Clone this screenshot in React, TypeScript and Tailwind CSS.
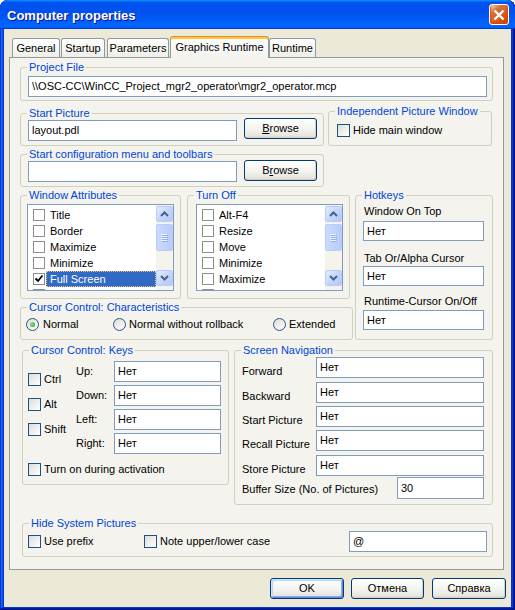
import React from 'react';

type BoxProps = { title: string; className?: string; children?: React.ReactNode };

const GroupBox = ({ title, className = '', children }: BoxProps) => (
  <div className={`relative shrink-0 rounded-[3px] border border-[#D0D0BF] ${className}`}>
    <span className="absolute -top-[7px] left-[6px] whitespace-nowrap bg-[#F4F3EE] px-[2px] leading-[13px] text-[#0046D5]">
      {title}
    </span>
    {children}
  </div>
);

const Edit = ({ value = '', className = '', h = 'h-[21px]' }: { value?: string; className?: string; h?: string }) => (
  <div className={`flex shrink-0 items-center border border-[#7F9DB9] bg-white px-[3px] leading-[13px] text-black ${h} ${className}`}>
    {value}
  </div>
);

const CheckBox = () => (
  <span className="h-[13px] w-[13px] shrink-0 border border-[#1C5180] bg-[linear-gradient(135deg,#DCDCD7,#FFFFFF)]" />
);

const Radio = ({ checked }: { checked?: boolean }) => (
  <span className="flex h-[13px] w-[13px] shrink-0 items-center justify-center rounded-full border border-[#2C5385] bg-[linear-gradient(135deg,#DCDCD7,#FFFFFF)]">
    {checked && <span className="h-[5px] w-[5px] rounded-full bg-[radial-gradient(circle_at_35%_35%,#8EE58A,#21A121)]" />}
  </span>
);

const XPButton = ({ children, className = '', isDefault = false }: { children: React.ReactNode; className?: string; isDefault?: boolean }) => (
  <div
    className={`flex h-[21px] shrink-0 items-center justify-center rounded-[3px] border border-[#003C74] bg-[linear-gradient(180deg,#FFFFFF,#F3F3EF_55%,#E6E5DE_88%,#D6D0C5)] text-black ${
      isDefault
        ? 'shadow-[inset_1px_1px_0_#CEE7FF,inset_-1px_-1px_0_#6982EE,inset_2px_2px_0_#BCD4F6,inset_-2px_-2px_0_#89ADE4]'
        : 'shadow-[inset_-1px_-1px_0_#D6D0C5]'
    } ${className}`}
  >
    {children}
  </div>
);

const ScrollBtn = ({ down }: { down?: boolean }) => (
  <div className="flex h-[16px] shrink-0 items-center justify-center rounded-[2px] border border-[#B9CCF7] bg-[linear-gradient(135deg,#E3EBFE,#C6D6FC_50%,#B3C8F8)]">
    <svg width="9" height="6" viewBox="0 0 9 6">
      <path d={down ? 'M1 1L4.5 4.5L8 1' : 'M1 5L4.5 1.5L8 5'} fill="none" stroke="#4D6185" strokeWidth="2" />
    </svg>
  </div>
);

const ScrollBar = () => (
  <div className="flex w-[17px] shrink-0 flex-col bg-[#F4F3EC] pb-[4px] pt-[1px]">
    <ScrollBtn />
    <div className="mt-[2px] flex h-[27px] shrink-0 items-center justify-center rounded-[2px] border border-[#B9CCF7] bg-[linear-gradient(90deg,#CBD9FC,#B8CCF9)]">
      <svg width="7" height="8" viewBox="0 0 7 8">
        {[0, 2, 4, 6].map((y) => (
          <g key={y}>
            <rect x="0" y={y} width="6" height="1" fill="#EEF4FE" />
            <rect x="1" y={y + 1} width="6" height="1" fill="#8CB0F8" />
          </g>
        ))}
      </svg>
    </div>
    <div className="flex-1" />
    <ScrollBtn down />
  </div>
);

const CheckList = ({ items, selected, className = '' }: { items: string[]; selected?: number; className?: string }) => (
  <div className={`flex h-[87px] w-[147px] border border-[#7F9DB9] bg-white ${className}`}>
    <div className="flex-1 overflow-hidden pt-[2px]">
      {items.map((it, i) => (
        <div key={it} className="flex h-[16px] items-center">
          <span className="ml-[5px] flex h-[12px] w-[12px] shrink-0 items-center justify-center border border-[#8E8F8F] bg-white">
            {i === selected && (
              <svg width="10" height="10" viewBox="0 0 10 10">
                <path d="M1.5 4.5L4 7L8.5 1.5" fill="none" stroke="#000" strokeWidth="1.8" />
              </svg>
            )}
          </span>
          <span
            className={`ml-[1px] flex h-full flex-1 items-center pl-[4px] ${
              i === selected ? 'bg-[#316AC5] text-white outline-1 -outline-offset-1 outline-dotted outline-[#E8C877]' : ''
            }`}
          >
            {it}
          </span>
        </div>
      ))}
      {/* next row, only the top of its box shows */}
      <div className="flex h-[16px] items-center">
        <span className="ml-[5px] h-[12px] w-[12px] shrink-0 border border-[#8E8F8F] bg-white" />
      </div>
    </div>
    <ScrollBar />
  </div>
);

const tabs = [
  { label: 'General', cls: 'w-[48px]' },
  { label: 'Startup', cls: 'ml-[1px] w-[44px]' },
  { label: 'Parameters', cls: 'ml-[2px] w-[62px]' },
  { label: 'Graphics Runtime', cls: 'ml-[1px] w-[99px]', active: true },
  { label: 'Runtime', cls: 'w-[47px]' },
];

const navRows = ['Forward', 'Backward', 'Start Picture', 'Recall Picture', 'Store Picture'];
const navGaps = ['', 'mt-[4px]', 'mt-[3px]', 'mt-[3px]', 'mt-[4px]'];

export default function App() {
  return (
    <div className="h-[610px] w-[515px] bg-white text-[11px] leading-[13px] text-black [font-family:'Liberation_Sans',Arial,sans-serif]">
      <div className="flex h-[610px] w-[515px] flex-col overflow-hidden rounded-t-[8px] bg-[#0831D9] pb-[3px] shadow-[inset_-1px_-1px_#00138c,inset_1px_1px_#0831d9,inset_-2px_-2px_#001ea0,inset_2px_2px_#166aee,inset_-3px_-3px_#003bda,inset_3px_3px_#0855dd]">
        {/* title bar */}
        <div className="flex h-[29px] shrink-0 items-center rounded-t-[8px] bg-[linear-gradient(180deg,#0997ff,#0053ee_8%,#0050ee_40%,#06f_88%,#06f_93%,#005bff_95%,#003dd7_96%,#003dd7)] pl-[7px] pr-[6px]">
          <span className="pt-[2px] text-[13px] font-bold text-white [text-shadow:1px_1px_#0F1089]">Computer properties</span>
          <div className="ml-auto flex h-[21px] w-[20px] items-center justify-center rounded-[3px] border border-white bg-[radial-gradient(circle_at_90%_90%,#cc4600_0,#dc6527_55%,#cd7546_70%,#ffccb2_90%,#fff_100%)] shadow-[inset_0_-1px_2px_1px_#da4600]">
            <svg width="12" height="12" viewBox="0 0 12 12">
              <path d="M1.5 1.5L10.5 10.5M10.5 1.5L1.5 10.5" stroke="#fff" strokeWidth="2.4" />
            </svg>
          </div>
        </div>

        {/* window body */}
        <div className="mx-[4px] flex h-[578px] flex-col bg-[#ECE9D8] pt-[7px]">
          <div className="flex h-[21px] items-end pl-[8px]">
            {tabs.map((t) =>
              t.active ? (
                <div
                  key={t.label}
                  className={`relative z-10 -mb-[1px] flex h-[22px] items-center justify-center rounded-t-[3px] border-x border-t border-[#919B9C] border-t-[#E68B2C] bg-[linear-gradient(180deg,#FCFCFE,#F4F3EE)] pb-[1px] shadow-[inset_0_2px_#FFC83C] ${t.cls}`}
                >
                  {t.label}
                </div>
              ) : (
                <div
                  key={t.label}
                  className={`flex h-[19px] items-center justify-center rounded-t-[3px] border-x border-t border-[#919B9C] bg-[linear-gradient(180deg,#fff,#fafaf9_26%,#f0f0ea_95%,#ecebe5)] ${t.cls}`}
                >
                  {t.label}
                </div>
              )
            )}
          </div>

          {/* tab panel */}
          <div className="ml-[5px] h-[513px] w-[495px] shrink-0 border border-[#919B9C] bg-[#F4F3EE] pl-[10px] pt-[9px]">
            <GroupBox title="Project File" className="h-[34px] w-[473px]">
              <div className="pl-[7px] pt-[8px]">
                <Edit value="\\OSC-CC\WinCC_Project_mgr2_operator\mgr2_operator.mcp" className="w-[459px]" />
              </div>
            </GroupBox>

            <div className="mt-[12px] flex items-start">
              <div className="flex flex-col">
                <GroupBox title="Start Picture" className="h-[33px] w-[304px]">
                  <div className="flex items-start pl-[7px] pt-[6px]">
                    <Edit value="layout.pdl" className="w-[209px]" />
                    <XPButton className="-mt-[2px] ml-[7px] w-[73px]">
                      <u>B</u>rowse
                    </XPButton>
                  </div>
                </GroupBox>
                <GroupBox title="Start configuration menu and toolbars" className="mt-[8px] h-[33px] w-[304px]">
                  <div className="flex items-start pl-[7px] pt-[6px]">
                    <Edit className="w-[209px]" />
                    <XPButton className="-mt-[1px] ml-[7px] w-[73px]">
                      B<u>r</u>owse
                    </XPButton>
                  </div>
                </GroupBox>
              </div>
              <GroupBox title="Independent Picture Window" className="-mt-[2px] ml-[4px] h-[35px] w-[164px]">
                <div className="flex items-center gap-[3px] pl-[8px] pt-[12px]">
                  <CheckBox />
                  <span>Hide main window</span>
                </div>
              </GroupBox>
            </div>

            <div className="mt-[8px] flex items-start">
              <div className="flex w-[333px] flex-col">
                <div className="flex">
                  <GroupBox title="Window Attributes" className="h-[104px] w-[161px]">
                    <CheckList
                      className="ml-[6px] mt-[8px]"
                      items={['Title', 'Border', 'Maximize', 'Minimize', 'Full Screen']}
                      selected={4}
                    />
                  </GroupBox>
                  <GroupBox title="Turn Off" className="ml-[6px] h-[104px] w-[163px]">
                    <CheckList className="ml-[8px] mt-[8px]" items={['Alt-F4', 'Resize', 'Move', 'Minimize', 'Maximize']} />
                  </GroupBox>
                </div>
                <GroupBox title="Cursor Control: Characteristics" className="mt-[8px] h-[33px] w-[333px]">
                  <div className="flex items-center pl-[5px] pt-[10px]">
                    <div className="flex w-[87px] items-center gap-[4px]">
                      <Radio checked />
                      <span>Normal</span>
                    </div>
                    <div className="flex w-[160px] items-center gap-[3px]">
                      <Radio />
                      <span>Normal without rollback</span>
                    </div>
                    <div className="flex items-center gap-[3px]">
                      <Radio />
                      <span>Extended</span>
                    </div>
                  </div>
                </GroupBox>
              </div>
              <GroupBox title="Hotkeys" className="ml-[2px] h-[145px] w-[138px]">
                <div className="flex flex-col pl-[8px] pt-[9px]">
                  <span>Window On Top</span>
                  <Edit value="Нет" h="h-[20px]" className="-ml-[1px] mt-[3px] w-[121px]" />
                  <span className="mt-[11px]">Tab Or/Alpha Cursor</span>
                  <Edit value="Нет" h="h-[20px]" className="-ml-[1px] mt-[1px] w-[121px]" />
                  <span className="mt-[9px]">Runtime-Cursor On/Off</span>
                  <Edit value="Нет" h="h-[20px]" className="-ml-[1px] mt-[2px] w-[121px]" />
                </div>
              </GroupBox>
            </div>

            <div className="mt-[10px] flex items-start">
              <GroupBox title="Cursor Control: Keys" className="ml-[2px] h-[135px] w-[207px]">
                <div className="flex pt-[10px]">
                  <div className="flex w-[53px] flex-col pl-[5px]">
                    <div className="mt-[12px] flex items-center gap-[3px]">
                      <CheckBox />
                      <span>Ctrl</span>
                    </div>
                    <div className="mt-[12px] flex items-center gap-[3px]">
                      <CheckBox />
                      <span>Alt</span>
                    </div>
                    <div className="mt-[12px] flex items-center gap-[3px]">
                      <CheckBox />
                      <span>Shift</span>
                    </div>
                  </div>
                  <div className="flex flex-col gap-[3px]">
                    {['Up:', 'Down:', 'Left:', 'Right:'].map((k) => (
                      <div key={k} className="flex h-[21px] items-center">
                        <span className="w-[38px]">{k}</span>
                        <Edit value="Нет" className="w-[107px]" />
                      </div>
                    ))}
                  </div>
                </div>
                <div className="mt-[9px] flex items-center gap-[3px] pl-[5px]">
                  <CheckBox />
                  <span>Turn on during activation</span>
                </div>
              </GroupBox>

              <GroupBox title="Screen Navigation" className="ml-[5px] h-[155px] w-[259px]">
                <div className="flex flex-col pl-[7px] pt-[6px]">
                  {navRows.map((r, i) => (
                    <div key={r} className={`flex h-[21px] items-center ${navGaps[i]}`}>
                      <span className="mt-[8px] w-[74px]">{r}</span>
                      <Edit value="Нет" className="w-[168px]" />
                    </div>
                  ))}
                  <div className="mt-[1px] flex h-[22px] items-center">
                    <span className="mt-[3px] w-[155px]">Buffer Size (No. of Pictures)</span>
                    <Edit value="30" h="h-[22px]" className="w-[87px]" />
                  </div>
                </div>
              </GroupBox>
            </div>

            <GroupBox title="Hide System Pictures" className="ml-[2px] mt-[18px] h-[34px] w-[471px]">
              <div className="mt-[7px] flex h-[21px] items-center pl-[5px]">
                <div className="flex w-[116px] items-center gap-[3px]">
                  <CheckBox />
                  <span>Use prefix</span>
                </div>
                <div className="flex w-[205px] items-center gap-[3px]">
                  <CheckBox />
                  <span>Note upper/lower case</span>
                </div>
                <Edit value="@" className="w-[138px]" />
              </div>
            </GroupBox>
          </div>

          {/* dialog buttons */}
          <div className="mt-[8px] flex justify-end pr-[5px]">
            <XPButton isDefault className="w-[74px]">OK</XPButton>
            <XPButton className="ml-[7px] w-[73px]">Отмена</XPButton>
            <XPButton className="ml-[8px] w-[74px]">Справка</XPButton>
          </div>
        </div>
      </div>
    </div>
  );
}
